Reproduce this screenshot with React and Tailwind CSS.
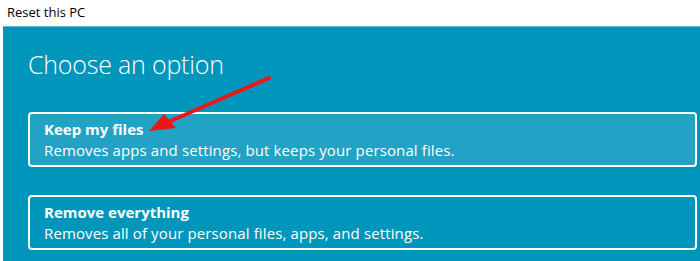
export default function App() {
  return (
    <div className="relative w-[700px] h-[261px] bg-white overflow-hidden flex flex-col" style={{ fontFamily: '"Open Sans", "Noto Sans", sans-serif' }}>
      <div className="h-[26px] flex items-center pl-[7px] text-[13px] text-black">Reset this PC</div>
      <div className="flex-1 ml-[3px] bg-[#0096bc] border-t border-[#5fb9d3] pl-[25px] pr-[3px] flex flex-col">
        <div className="text-white text-[25px] font-light leading-none mt-[25px] h-[60px] tracking-[-0.2px]">Choose an option</div>
        <div className="h-[55px] rounded-[4px] border-2 border-white bg-[#22a2c4] pl-[14px] flex flex-col justify-center text-white">
          <div className="text-[15px] font-bold leading-[21px]">Keep my files</div>
          <div className="text-[15px] leading-[21px] tracking-[0.12px]">Removes apps and settings, but keeps your personal files.</div>
        </div>
        <div className="h-[28px]" />
        <div className="h-[55px] rounded-[4px] border-2 border-white pl-[14px] flex flex-col justify-center text-white">
          <div className="text-[15px] font-bold leading-[21px]">Remove everything</div>
          <div className="text-[15px] leading-[21px] tracking-[0.12px]">Removes all of your personal files, apps, and settings.</div>
        </div>
      </div>
      <svg className="absolute left-0 top-0" width="700" height="261" viewBox="0 0 700 261">
        <line x1="269" y1="78" x2="166" y2="123" stroke="#f01515" strokeWidth="4" strokeLinecap="round" />
        <polygon points="149,131 164,114 176,128" fill="#f01515" />
      </svg>
    </div>
  );
}
